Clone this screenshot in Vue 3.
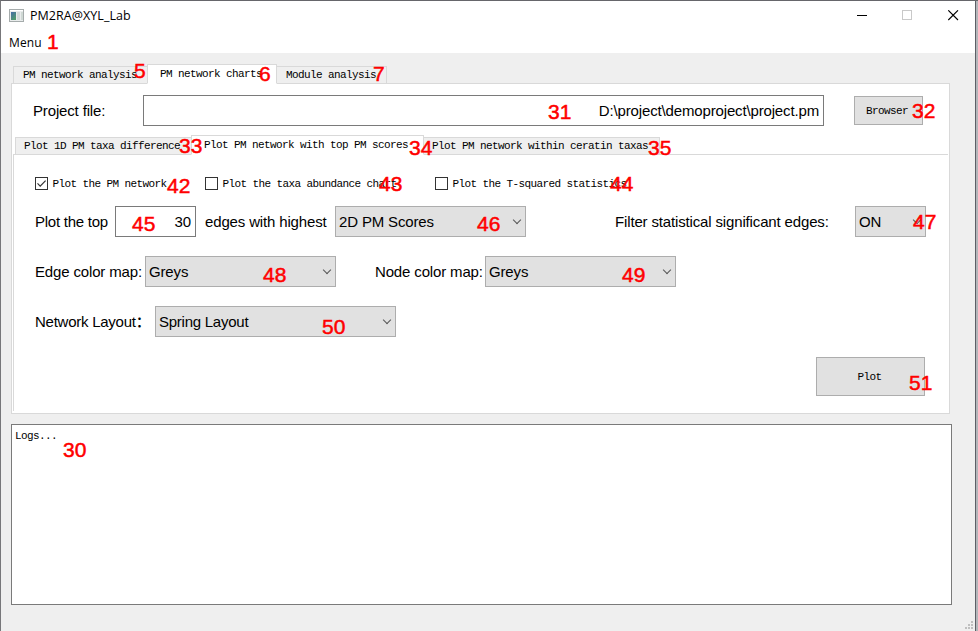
<script setup>
import { ref } from 'vue'

const mainTabs = [
  { label: 'PM network analysis', cls: 'm1' },
  { label: 'PM network charts', cls: 'm2', active: true },
  { label: 'Module analysis', cls: 'm3' },
]
const plotTabs = [
  { label: 'Plot 1D PM taxa difference', cls: 'p1' },
  { label: 'Plot PM network with top PM scores', cls: 'p2', active: true },
  { label: 'Plot PM network within ceratin taxas', cls: 'p3' },
]
const checks = ref([
  { label: 'Plot the PM network', on: true },
  { label: 'Plot the taxa abundance chart', on: false },
  { label: 'Plot the T-squared statistics', on: false },
])
// Numbered callouts lying over the window: [number, left, vertical centre]
const marks = [
  [1, 47, 42], [5, 134, 71], [6, 259, 74], [7, 373, 74],
  [31, 548, 112], [32, 912, 111], [33, 179, 146], [34, 409, 148], [35, 648, 148],
  [42, 167, 186], [43, 379, 184], [44, 610, 184], [45, 132, 224], [46, 477, 224],
  [47, 913, 222], [48, 263, 275], [49, 622, 275], [50, 322, 327], [51, 909, 383],
  [30, 63, 450],
]
</script>

<template>
  <div class="window">
    <header class="titlebar">
      <svg class="appicon" width="15" height="13" viewBox="0 0 15 13">
        <defs>
          <linearGradient id="pic" x1="0" y1="0" x2="0.6" y2="1">
            <stop offset="0" stop-color="#456ba8" />
            <stop offset="1" stop-color="#4f9a6b" />
          </linearGradient>
        </defs>
        <rect x="0.5" y="0.5" width="14" height="12" fill="#e9ecec" stroke="#a5abab" />
        <rect x="1" y="1" width="13" height="1" fill="#fff" />
        <rect x="2" y="3" width="5" height="8" fill="url(#pic)" />
        <rect x="8" y="3" width="3" height="8" fill="#d3dad9" />
        <rect x="12" y="3" width="2" height="8" fill="#cfd8d4" />
      </svg>
      <span class="title">PM2RA@XYL_Lab</span>
      <svg class="controls" width="103" height="11" viewBox="0 0 103 11" fill="none">
        <path d="M0 5.5H10" stroke="#000" />
        <rect x="45.5" y="0.5" width="9" height="9" stroke="#c9c9c9" />
        <path d="M91.3 .3L101 10M101 .3L91.3 10" stroke="#000" stroke-width="1.1" />
      </svg>
    </header>
    <nav class="menubar">Menu</nav>

    <main class="body">
      <div class="tabs">
        <div v-for="t in mainTabs" :key="t.label" class="tab" :class="[t.cls, { active: t.active }]">{{ t.label }}</div>
      </div>
      <section class="pane">
        <div class="project">
          <label class="big lproject">Project file:</label>
          <div class="field path big"><span>D:\project\demoproject\project.pm</span></div>
          <button class="btn browse">Browser</button>
        </div>

        <div class="tabs sub">
          <div v-for="t in plotTabs" :key="t.label" class="tab" :class="[t.cls, { active: t.active }]">{{ t.label }}</div>
        </div>
        <div class="subpane">
          <div class="checks">
            <div v-for="(c, i) in checks" :key="i" class="check" @click="c.on = !c.on">
              <span class="box">
                <svg v-if="c.on" width="11" height="11" viewBox="0 0 11 11">
                  <path d="M1.5 5.4L4.2 8.1L9.6 2.6" fill="none" stroke="#333" stroke-width="1.2" />
                </svg>
              </span>
              <span>{{ c.label }}</span>
            </div>
          </div>

          <div class="row">
            <span class="big ltop">Plot the top</span>
            <div class="field count big">30</div>
            <span class="big ledges">edges with highest</span>
            <div class="select w191 big">2D PM Scores<i class="chev"></i></div>
            <span class="big lfilter">Filter statistical significant edges:</span>
            <div class="select w71 big">ON<i class="chev"></i></div>
          </div>
          <div class="row">
            <span class="big ledge">Edge color map:</span>
            <div class="select w191 big">Greys<i class="chev"></i></div>
            <span class="big lnode">Node color map:</span>
            <div class="select w191 big">Greys<i class="chev"></i></div>
          </div>
          <div class="row">
            <span class="big llayout">Network Layout<span class="colon">：</span></span>
            <div class="select w241 big">Spring Layout<i class="chev"></i></div>
          </div>
          <button class="btn plot">Plot</button>
        </div>
      </section>
      <section class="log">Logs...</section>
    </main>

    <svg class="grip" width="8" height="8" viewBox="0 0 8 8" fill="#bfbfbf">
      <path d="M6 0h2v2H6zM3 3h2v2H3zM6 3h2v2H6zM0 6h2v2H0zM3 6h2v2H3zM6 6h2v2H6z" />
    </svg>
    <span v-for="m in marks" :key="m[0]" class="mark" :style="{ left: m[1] + 'px', top: m[2] + 'px' }">{{ m[0] }}</span>
  </div>
</template>

<style>
body { overflow: hidden; }
</style>

<style scoped>
* { box-sizing: border-box; }
.window {
  position: relative; width: 978px; height: 631px; background: #efefef; overflow: hidden;
  border-top: 1px solid #66666b; border-left: 1px solid #77777a;
  font: 11px/12px "Liberation Mono", monospace; letter-spacing: -0.6px; color: #000; white-space: nowrap;
}
.window::after {
  content: ""; position: absolute; right: 0; top: 0; bottom: 0; width: 2px;
  background: #b4b6ba; border-left: 1px solid #5d6066;
}
.titlebar {
  display: flex; align-items: center; height: 29px; padding-left: 8px; background: #fff;
  font: 12.5px/16px "Open Sans", sans-serif; letter-spacing: 0.05px;
}
.appicon { margin-right: 6px; }
.title { width: 827px; }
.menubar {
  height: 23px; padding: 5px 0 0 8px; background: #fff;
  font: 12px/16px "Open Sans", sans-serif; letter-spacing: 0.1px;
}
.body { padding: 11px 0 0 10px; }
.tabs { display: flex; align-items: flex-end; height: 20px; position: relative; z-index: 1; padding-left: 2px; }
.tab {
  height: 18px; padding: 2px 0 0 9px;
  border: 1px solid #d9d9d9; background: #efefef;
}
.tab.active { height: 20px; padding-top: 3px; background: #fff; border-bottom-color: #fff; position: relative; z-index: 1; }
.m1 { width: 135px; }
.tab.m2 { width: 130px; padding-left: 12px; margin-left: -1px; }
.m3 { width: 111px; padding-left: 9px; margin-left: -1px; }
.pane { width: 939px; height: 331px; margin-top: -1px; border: 1px solid #d9d9d9; background: #fff; padding: 11px 0 0 1px; }
.big { font: 15px/17px "Liberation Sans", Arial, sans-serif; letter-spacing: -0.15px; }
.project { display: flex; align-items: center; height: 31px; padding-left: 20px; }
.lproject { width: 110px; }
.field { border: 1px solid #7a7a7a; background: #fff; height: 31px; display: flex; align-items: center; justify-content: flex-end; padding-right: 4px; }
.path { width: 681px; margin-right: 30px; }
.btn {
  padding: 0; border: 1px solid #adadad; background: #e1e1e1; color: #000;
  font: inherit; letter-spacing: inherit; text-align: center;
}
.browse { width: 69px; height: 29px; padding-right: 3px; }
.sub { margin-top: 9px; }
.sub .tab { padding-left: 8px; }
.p1 { width: 177px; }
.sub .p2 { width: 233px; padding-left: 12px; margin-left: -1px; }
.p3 { width: 237px; margin-left: -1px; }
.subpane { width: 935px; height: 257px; margin-top: -1px; border: 1px solid #d9d9d9; border-width: 1px 0 0 1px; padding: 22px 0 0 21px; }
.checks { display: flex; height: 13px; margin-bottom: 16px; }
.check { display: flex; align-items: center; width: 170px; }
.check:nth-child(2) { width: 230px; }
.check:nth-child(3) { width: 200px; }
.box { flex: none; width: 13px; height: 13px; border: 1px solid #333; margin-right: 4.5px; display: flex; background: #fff; }
.row { display: flex; align-items: center; height: 31px; margin-bottom: 19px; }
.ltop { width: 80px; letter-spacing: -0.25px; }
.count { width: 81px; margin-right: 9px; }
.ledges { width: 130px; }
.lfilter { width: 240px; margin-left: 89px; }
.ledge, .lnode { width: 110px; }
.lnode { margin-left: 39px; }
.llayout { width: 120px; height: 17px; letter-spacing: -0.25px; }
.colon { font-family: "Noto Sans CJK SC", sans-serif; font-weight: 500; line-height: 1; }
.select { display: flex; align-items: center; justify-content: space-between; height: 31px; padding: 0 5px 0 3px; border: 1px solid #adadad; background: #e1e1e1; }
.w191 { width: 191px; }
.w71 { width: 71px; }
.w241 { width: 241px; letter-spacing: -0.25px; }
.chev { width: 6px; height: 6px; border: solid #555; border-width: 0 1px 1px 0; transform: translateY(-2px) rotate(45deg); }
.plot { display: block; width: 109px; height: 39px; margin: 20px 0 0 781px; padding-right: 2px; }
.log { width: 941px; height: 181px; margin-top: 10px; border: 1px solid #7a7a7a; background: #fff; padding: 5px 0 0 3px; }
.grip { position: absolute; right: 5px; bottom: 2px; }
.mark {
  position: absolute; z-index: 5; transform: translate(-1px, -50%); margin-top: -1px; color: #f00;
  font: 21px/22px "Liberation Sans", Arial, sans-serif; letter-spacing: 0; -webkit-text-stroke: 0.5px #f00;
}
</style>
